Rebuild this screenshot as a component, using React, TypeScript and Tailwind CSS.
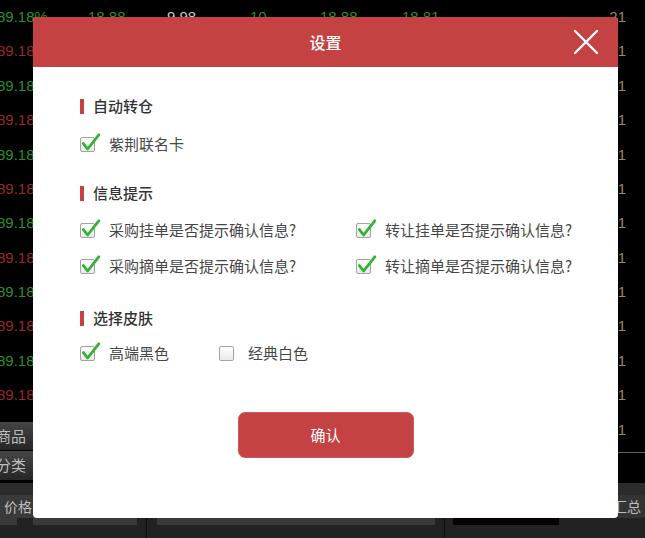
import React from "react";

const rows = Array.from({ length: 13 }, (_, i) => i);

function Check({ checked }: { checked: boolean }) {
  return (
    <svg width="22" height="23" viewBox="0 0 22 23" className="shrink-0">
      <defs>
        <linearGradient id="boxg" x1="0" y1="0" x2="0" y2="1">
          <stop offset="0" stopColor="#ffffff" />
          <stop offset="1" stopColor="#e9e9e9" />
        </linearGradient>
      </defs>
      <rect x="0.5" y="4.5" width="14" height="14" rx="1.5" fill="url(#boxg)" stroke="#a3a3a3" />
      {checked && (
        <path
          d="M3.4 10.6 L7.6 16 L18.8 1.8"
          fill="none"
          stroke="#34b234"
          strokeWidth="2.8"
          strokeLinecap="round"
          strokeLinejoin="round"
        />
      )}
    </svg>
  );
}

function Option({ label, checked = true, className = "" }: { label: string; checked?: boolean; className?: string }) {
  return (
    <div className={`flex items-center h-5 ${className}`}>
      <Check checked={checked} />
      <span className="ml-[7px] text-[15px] leading-5 text-[#474747]">{label}</span>
    </div>
  );
}

function Heading({ title }: { title: string }) {
  return (
    <div className="flex items-center h-5">
      <span className="w-1 h-[15px] bg-[#c44242]" />
      <span className="ml-[9px] text-[15px] leading-5 font-medium text-[#333]">{title}</span>
    </div>
  );
}

export default function App() {
  return (
    <div className="relative w-[645px] h-[538px] overflow-hidden bg-black font-['Noto_Sans_CJK_SC','Noto_Sans',sans-serif]">
      {/* quote table behind the dialog */}
      <div className="relative h-[483px] bg-black">
        <div className="font-['Liberation_Sans',sans-serif] text-[15px]">
          {rows.map((i) => {
            const up = i % 2 === 0;
            const c = up ? "text-[#2c8f2c]" : "text-[#982a28]";
            return (
              <div key={i} className="flex items-center h-[34.4px] -ml-[3px]">
                <span className={`w-[91px] ${c}`}>89.18%</span>
                <span className={`w-[79px] ${c}`}>18.88</span>
                <span className="w-[83px] text-[#c8c8c8]">9.98</span>
                <span className={`w-[70px] ${c}`}>10</span>
                <span className={`w-[82px] ${c}`}>18.88</span>
                <span className={`w-[60px] ${c}`}>18.81</span>
                <span className="flex-1 text-right pr-[19px] text-[#968768]">21</span>
              </div>
            );
          })}
        </div>
        <div className="mt-[5px] h-px bg-[#5c5c5c]" />

        <div className="absolute left-0 top-[422px] w-[80px] flex flex-col text-[15px] text-[#bdbdbd]">
          <div className="h-[28px] flex items-center bg-gradient-to-b from-[#454545] to-[#262626]">
            <span className="-ml-[4px]">商品</span>
          </div>
          <div className="h-px bg-black" />
          <div className="h-[29px] flex items-center bg-gradient-to-b from-[#454545] to-[#262626]">
            <span className="-ml-[4px]">分类</span>
          </div>
          <div className="h-[3px] bg-black" />
        </div>
      </div>

      <div className="h-[12px] bg-[#2b2b2b]" />
      <div className="h-[23px] flex bg-[#2e2e2e] text-[14px] text-[#bdbdbd]">
        <div className="w-[60px] pl-[4px] flex items-center bg-[#3a3a3a]">价格</div>
        <div className="flex-1" />
        <div className="w-[32px] flex items-center whitespace-nowrap bg-[#343434]">汇总</div>
      </div>
      <div className="h-[20px] flex bg-[#222]">
        <div className="w-[17px] h-[7px] bg-[#3a3a3a]" />
        <div className="w-[16px]" />
        <div className="w-[104px] h-[7px] bg-[#3a3a3a]" />
        <div className="w-[9px]" />
        <div className="w-px bg-[#0e0e0e]" />
        <div className="w-[10px]" />
        <div className="w-[278px] h-[7px] bg-[#3a3a3a]" />
        <div className="w-[9px]" />
        <div className="w-px bg-[#0e0e0e]" />
        <div className="w-[8px]" />
        <div className="w-[106px] h-[7px] bg-[#070303]" />
      </div>

      {/* settings dialog */}
      <div className="absolute left-[33px] top-[17px] w-[585px] h-[501px] bg-white rounded-[4px] overflow-hidden flex flex-col">
        <div className="relative h-[50px] shrink-0 bg-[#c44242] flex items-center justify-center">
          <span className="text-[16px] font-medium text-white">设置</span>
          <svg
            className="absolute right-[19px] top-[12px]"
            width="26"
            height="26"
            viewBox="0 0 26 26"
            fill="none"
            stroke="white"
            strokeWidth="2.4"
            strokeLinecap="round"
          >
            <path d="M2 2 L24 24 M24 2 L2 24" />
          </svg>
        </div>

        <div className="pl-[47px] pt-[29px] flex flex-col">
          <Heading title="自动转仓" />
          <Option label="紫荆联名卡" className="mt-[18px]" />

          <div className="mt-[29px]">
            <Heading title="信息提示" />
          </div>
          <div className="mt-[17px] grid grid-cols-[276px_auto] gap-y-[16px]">
            <Option label="采购挂单是否提示确认信息?" />
            <Option label="转让挂单是否提示确认信息?" />
            <Option label="采购摘单是否提示确认信息?" />
            <Option label="转让摘单是否提示确认信息?" />
          </div>

          <div className="mt-[32px]">
            <Heading title="选择皮肤" />
          </div>
          <div className="mt-[15px] flex">
            <Option label="高端黑色" className="w-[139px]" />
            <Option label="经典白色" checked={false} />
          </div>
        </div>

        <div className="mt-[49px] flex justify-center">
          <button className="w-[176px] h-[46px] rounded-[7px] bg-[#c44242] border border-[#cf5a5a] text-white text-[15px]">
            确认
          </button>
        </div>
      </div>
    </div>
  );
}
